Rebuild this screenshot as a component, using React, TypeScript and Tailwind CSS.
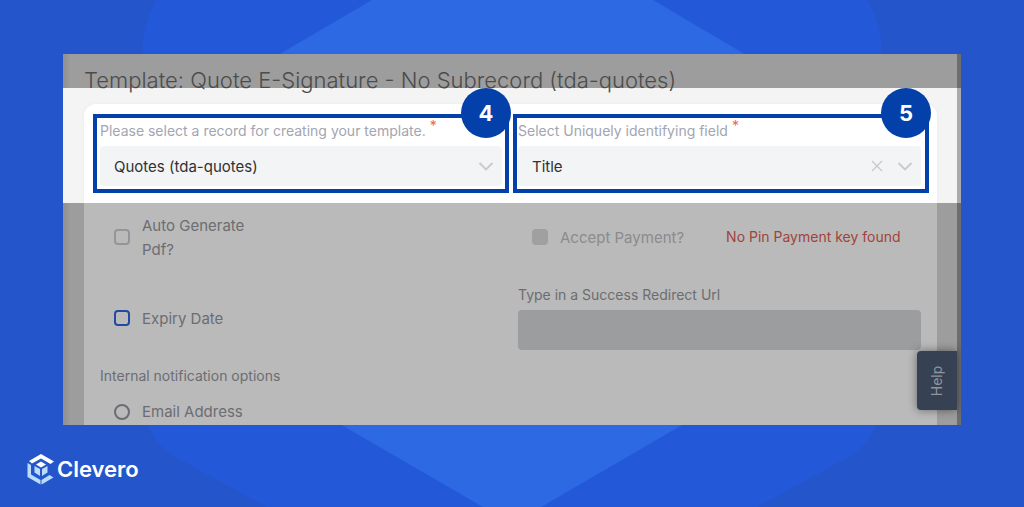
import { useState, type ReactNode } from "react";

function Backdrop() {
  return (
    <svg
      className="absolute inset-0 h-full w-full"
      viewBox="0 0 1024 507"
      preserveAspectRatio="none"
      aria-hidden="true"
    >
      <path
        d="M157 0 Q142 22 142 60 V390 Q142 434 172 455 L267 507 H757 L852 455 Q882 434 882 390 V60 Q882 22 867 0 Z"
        fill="#2359d8"
      />
      <path d="M372 0 H653 L880 134 V310 L541 507 H483 L143 310 V134 Z" fill="#2c69e2" />
    </svg>
  );
}

function Chevron() {
  return (
    <svg className="h-4 w-4" viewBox="0 0 16 16" fill="none" stroke="#c9cacc" strokeWidth="1.9" aria-hidden="true">
      <path d="M1.5 5 L8 11.5 L14.5 5" />
    </svg>
  );
}

function Cross() {
  return (
    <svg className="h-3 w-3" viewBox="0 0 12 12" fill="none" stroke="#c9cacc" strokeWidth="1.4" aria-hidden="true">
      <path d="M1 1 L11 11 M11 1 L1 11" />
    </svg>
  );
}

type StepProps = {
  step: number;
  id: string;
  label: string;
  value: string;
  inset: string;
  clearable?: boolean;
};

function StepField({ step, id, label, value, inset, clearable }: StepProps) {
  const [current, setCurrent] = useState(value);
  return (
    <div className={`relative h-[79px] border-4 border-[#0340a9] ${inset}`}>
      <label htmlFor={id} className="flex h-7 items-center gap-1 pb-0.5 text-sm whitespace-nowrap text-[#a3a5b0]">
        {label}
        <span className="self-start text-sm leading-4 text-[#f0625a]">*</span>
      </label>
      <div className="relative">
        <select
          id={id}
          value={current}
          onChange={(e) => setCurrent(e.target.value)}
          className="h-10 w-full appearance-none rounded bg-[#f3f4f6] px-3.5 pt-0.5 text-[15px] text-[#303133]"
        >
          <option value=""></option>
          <option value={value}>{value}</option>
        </select>
        <div className="pointer-events-none absolute inset-y-0 right-2 flex items-center gap-3.5">
          {clearable && (
            <button type="button" aria-label="Clear" className="pointer-events-auto" onClick={() => setCurrent("")}>
              <Cross />
            </button>
          )}
          <Chevron />
        </div>
      </div>
      <span className="absolute -top-[30px] -right-[6px] flex size-[50px] items-center justify-center rounded-full bg-[#0340a9] text-[22px] font-bold text-white">
        {step}
      </span>
    </div>
  );
}

function Check({ children, box, text, disabled }: { children: ReactNode; box: string; text: string; disabled?: boolean }) {
  return (
    <label className={`flex items-center gap-3 pl-3.5 text-[15px] leading-6 ${text}`}>
      <input type="checkbox" disabled={disabled} className={`size-4 shrink-0 appearance-none rounded-[4px] border-2 ${box}`} />
      <span className="pt-0.5">{children}</span>
    </label>
  );
}

function Logo() {
  return (
    <a href="#" className="absolute bottom-[22px] left-[27px] flex items-center gap-0.5 text-white">
      <svg className="h-8 w-7" viewBox="0 0 28 32" aria-hidden="true">
        <path d="M2 8 L14 1 L27 8.500 L23.500 11 L14 5.500 L5 10.500 Z" fill="#fff" />
        <path d="M0.500 10 L4 12 V21.500 L13.500 27 V31.500 L0.500 24 Z" fill="#b9dcfb" />
        <path d="M14.500 27 L22.500 22 L26.500 24.500 L14.500 31.500 Z" fill="#b9dcfb" />
        <path d="M14 8.500 L19 11.500 L14 14.500 L9 11.500 Z" fill="#fff" />
        <path d="M7.500 13 L13 16 V23 L7.500 19.500 Z" fill="#b9dcfb" />
        <path d="M20.500 13 L15 16 V23 L20.500 19.500 Z" fill="#b9dcfb" />
      </svg>
      <span className="text-[22px] leading-8 font-semibold">Clevero</span>
    </a>
  );
}

export default function App() {
  return (
    <main className="relative min-h-screen bg-[#2455cb] pt-[54px] pr-[63px] pb-[82px] pl-[63px] font-[Inter,sans-serif]">
      <Backdrop />
      <form className="relative overflow-hidden" onSubmit={(e) => e.preventDefault()}>
        <header className="relative z-10 h-[34px] border-r-4 border-[#6d6d6d] bg-[#9d9d9d] bg-linear-to-r from-[#8f8f8f] to-[#9d9d9d] to-[8px] pt-2 pl-[21px]">
          <h1 className="text-[22px] leading-9 font-light whitespace-nowrap text-[#4c4c4c]">
            Template: Quote E-Signature - No Subrecord (tda-quotes)
          </h1>
        </header>

        <section className="border-r-4 border-[#aaaaaa] bg-[#f4f4f4] pt-4 pr-5 pl-[21px]">
          <div className="grid grid-cols-2 gap-1 rounded-t-xl bg-white pt-2.5 pr-2 pb-2.5 pl-[9px] shadow-[0_0_4px_rgba(0,0,0,0.04)]">
            <StepField
              step={4}
              id="record"
              label="Please select a record for creating your template."
              value="Quotes (tda-quotes)"
              inset="px-[3px]"
            />
            <StepField
              step={5}
              id="field"
              label="Select Uniquely identifying field"
              value="Title"
              inset="pl-px pr-1"
              clearable
            />
          </div>
        </section>

        <section className="relative border-r-4 border-[#6d6d6d] bg-[#9d9d9d] bg-linear-to-r from-[#8f8f8f] to-[#9d9d9d] to-[8px] pr-5 pl-[21px]">
          <div className="bg-[#bababa] pt-2.5 pr-4 pl-4 text-[#6c6d72]">
            <div className="grid grid-cols-2 gap-x-[15px]">
              <div className="flex h-12 items-center">
                <Check box="border-[#959595]" text="text-[#6c6d72]">
                  Auto Generate
                  <br />
                  Pdf?
                </Check>
              </div>
              <div className="flex h-12 items-center gap-[42px]">
                <Check box="border-[#a0a0a0] bg-[#a0a0a0]" text="text-[#8b8b8d]" disabled>
                  Accept Payment?
                </Check>
                <span className="text-sm text-[#a2433b]">No Pin Payment key found</span>
              </div>
              <div className="mt-6 flex items-center">
                <Check box="border-[#2249a5]" text="text-[#6c6d72]">
                  Expiry Date
                </Check>
              </div>
              <div className="mt-6">
                <label htmlFor="redirect" className="mb-[5px] block text-sm">
                  Type in a Success Redirect Url
                </label>
                <input id="redirect" type="text" className="block h-10 w-full rounded bg-[#9c9d9f] px-3" />
              </div>
            </div>
            <fieldset className="mt-4">
              <legend className="text-sm">Internal notification options</legend>
              <label className="mt-3.5 flex h-[25px] items-center gap-3 pb-0.5 pl-3.5 text-[15px]">
                <input type="radio" name="notify" className="size-4 appearance-none rounded-full border-2 border-[#6c6d72]" />
                <span className="pt-0.5">Email Address</span>
              </label>
            </fieldset>
          </div>
        </section>

        <button
          type="button"
          className="absolute right-1 bottom-[15px] flex h-[59px] w-10 items-center justify-center rounded-l bg-[#364153] text-sm text-[#8f959e] shadow-[0_0_10px_rgba(0,0,0,0.45)]"
        >
          <span className="-rotate-90">Help</span>
        </button>
      </form>
      <Logo />
    </main>
  );
}
